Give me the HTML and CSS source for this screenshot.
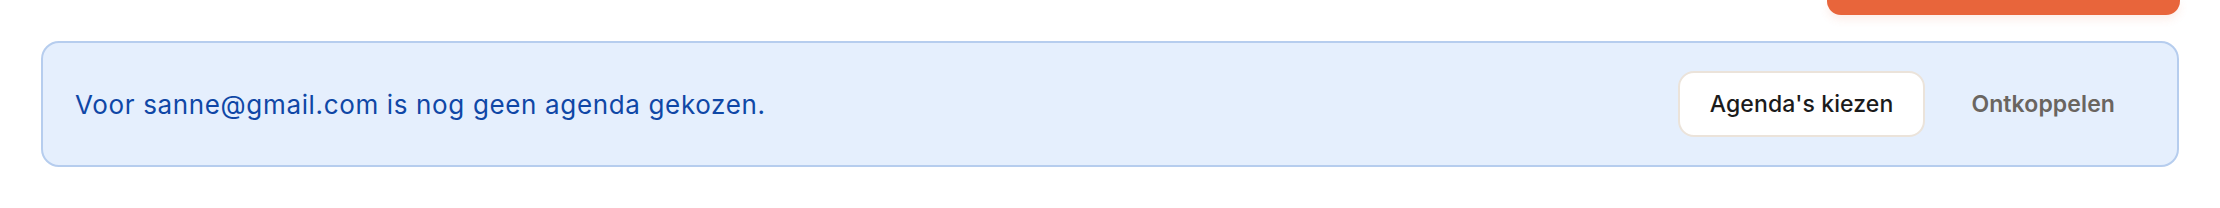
FILE: index.html
```html
<!DOCTYPE html>
<html>
<head>
  <title>Agenda koppelingen</title>
  <link rel="stylesheet" href="styles.css">
</head>
<body>

    <div class="top-row">
        <div class="orange-bar"></div>
    </div>

    <div class="notice-box">
        <p class="notice-text">Voor sanne@gmail.com is nog geen agenda gekozen.</p>
        <div class="notice-actions">
            <button class="btn btn-white">Agenda's kiezen</button>
            <button class="btn btn-ghost">Ontkoppelen</button>
        </div>
    </div>

</body>
</html>
```

FILE: styles.css
```css
body {
    margin: 0;
    background: #ffffff;
    font-family: "Inter", "Noto Sans", sans-serif;
}

.top-row {
    display: flex;
    justify-content: flex-end;
    padding: 0 40px 0 41px;
}

.orange-bar {
    width: 353px;
    height: 15px;
    background: #e8653b;
    border-radius: 0 0 14px 14px;
    box-shadow: 0 4px 10px rgba(232, 101, 59, 0.12);
}

.notice-box {
    margin: 26px 41px 0 41px;
    height: 126px;
    box-sizing: border-box;
    display: flex;
    align-items: center;
    justify-content: space-between;
    padding: 0 30px 0 32px;
    background: #e5effd;
    border: 2px solid #b6cdee;
    border-radius: 18px;
}

.notice-text {
    margin: 0;
    color: #0f47a6;
    font-size: 26px;
    letter-spacing: 0.65px;
}

.notice-actions {
    display: flex;
    align-items: center;
    gap: 14px;
}

.btn {
    font-family: "Inter", "Noto Sans", sans-serif;
    font-size: 23px;
    font-weight: 500;
    letter-spacing: 0.1px;
    height: 66px;
    padding: 0 30px;
    border-radius: 16px;
    cursor: pointer;
}

.btn-white {
    background: #ffffff;
    color: #1b1b1b;
    border: 2px solid #ebe3da;
}

.btn-ghost {
    background: transparent;
    color: #6a6560;
    font-weight: 600;
    border: 2px solid transparent;
}
```
